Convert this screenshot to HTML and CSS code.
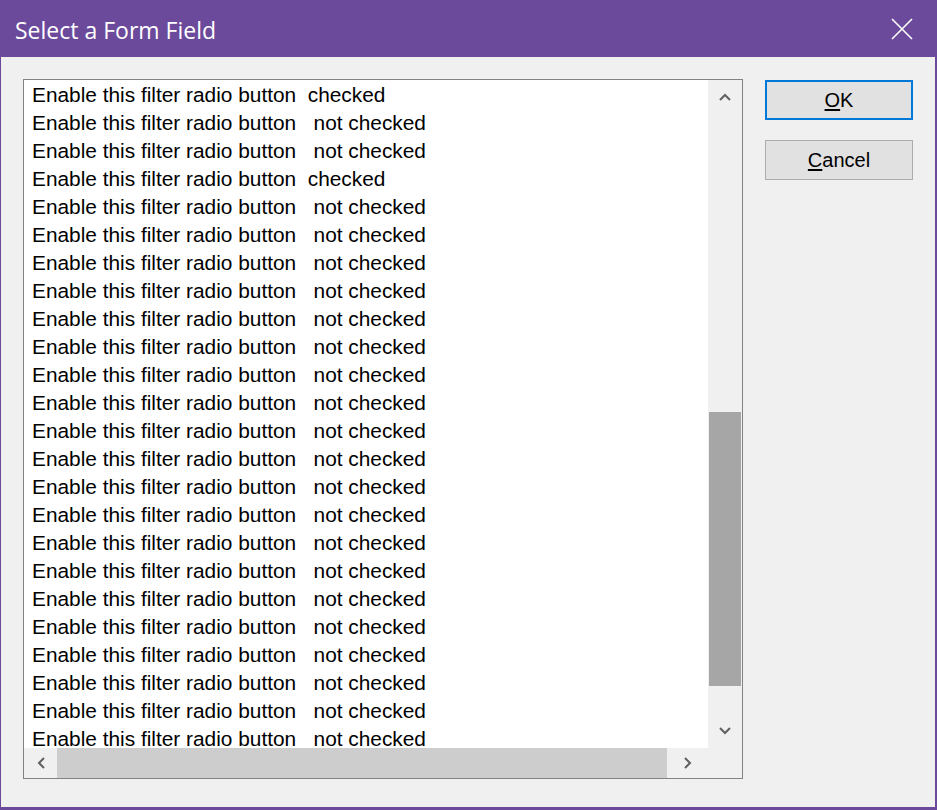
FILE: index.html
```html
<!DOCTYPE html>
<html>
<head>
<meta charset="utf-8">
<link rel="stylesheet" href="styles.css">
</head>
<body>
<div class="window">
  <div class="titlebar">
    <span class="title">Select a Form Field</span>
    <span class="close">
      <svg width="22" height="22" viewBox="0 0 22 22"><path d="M1 1 L21 21 M21 1 L1 21" stroke="#fff" stroke-width="1.6" fill="none"/></svg>
    </span>
  </div>
  <div class="content">
    <div class="listbox">
      <div class="rows">
        <div class="row">Enable this filter radio button  checked</div>
        <div class="row">Enable this filter radio button   not checked</div>
        <div class="row">Enable this filter radio button   not checked</div>
        <div class="row">Enable this filter radio button  checked</div>
        <div class="row">Enable this filter radio button   not checked</div>
        <div class="row">Enable this filter radio button   not checked</div>
        <div class="row">Enable this filter radio button   not checked</div>
        <div class="row">Enable this filter radio button   not checked</div>
        <div class="row">Enable this filter radio button   not checked</div>
        <div class="row">Enable this filter radio button   not checked</div>
        <div class="row">Enable this filter radio button   not checked</div>
        <div class="row">Enable this filter radio button   not checked</div>
        <div class="row">Enable this filter radio button   not checked</div>
        <div class="row">Enable this filter radio button   not checked</div>
        <div class="row">Enable this filter radio button   not checked</div>
        <div class="row">Enable this filter radio button   not checked</div>
        <div class="row">Enable this filter radio button   not checked</div>
        <div class="row">Enable this filter radio button   not checked</div>
        <div class="row">Enable this filter radio button   not checked</div>
        <div class="row">Enable this filter radio button   not checked</div>
        <div class="row">Enable this filter radio button   not checked</div>
        <div class="row">Enable this filter radio button   not checked</div>
        <div class="row">Enable this filter radio button   not checked</div>
        <div class="row">Enable this filter radio button   not checked</div>
        <div class="row">Enable this filter radio button   not checked</div>
      </div>
      <div class="vscroll">
        <div class="sbtn v">
          <svg width="12" height="8" viewBox="0 0 12 8"><polyline points="1,7 6,2 11,7" stroke="#606060" stroke-width="2" fill="none"/></svg>
        </div>
        <div class="vtrack">
          <div class="vthumb" style="margin-top:298px;height:274px"></div>
        </div>
        <div class="sbtn v">
          <svg width="12" height="8" viewBox="0 0 12 8"><polyline points="1,1 6,6 11,1" stroke="#606060" stroke-width="2" fill="none"/></svg>
        </div>
      </div>
      <div class="hscroll">
        <div class="sbtn hl">
          <svg width="8" height="12" viewBox="0 0 8 12"><polyline points="7,1 2,6 7,11" stroke="#606060" stroke-width="2" fill="none"/></svg>
        </div>
        <div class="hthumb" style="width:610px"></div>
        <div class="htrack"></div>
        <div class="sbtn hr">
          <svg width="8" height="12" viewBox="0 0 8 12"><polyline points="1,1 6,6 1,11" stroke="#606060" stroke-width="2" fill="none"/></svg>
        </div>
      </div>
      <div class="corner"></div>
    </div>
    <div class="buttons">
      <div class="btn default"><span class="ul">O</span>K</div>
      <div class="btn"><span class="ul">C</span>ancel</div>
    </div>
  </div>
</div>
</body>
</html>
```

FILE: styles.css
```css
html, body {
  margin: 0;
  padding: 0;
}
body {
  width: 937px;
  height: 810px;
  overflow: hidden;
  background: #f0f0f0;
}
.window {
  width: 937px;
  height: 810px;
  display: flex;
  flex-direction: column;
  background: #f0f0f0;
}
.titlebar {
  height: 57px;
  flex: none;
  background: #6b4a9c;
  display: flex;
  align-items: center;
  justify-content: space-between;
  padding: 0 24px 0 15px;
}
.title {
  font-family: "Open Sans", "Noto Sans", sans-serif;
  font-size: 23px;
  color: #ffffff;
  padding-top: 3px;
}
.close {
  display: flex;
  padding-top: 1px;
}
.content {
  flex: 1;
  display: flex;
  gap: 22px;
  padding: 22px 22px 28px 22px;
  border-left: 1px solid #6b4a9c;
  border-right: 2px solid #6b4a9c;
  border-bottom: 3px solid #6b4a9c;
}
.listbox {
  width: 720px;
  height: 700px;
  box-sizing: border-box;
  border: 1px solid #828282;
  background: #ffffff;
  display: grid;
  grid-template-columns: 684px 34px;
  grid-template-rows: 668px 30px;
}
.rows {
  overflow: hidden;
  padding: 1px 0 0 8px;
  font-family: "Liberation Sans", Arial, sans-serif;
  font-size: 20.85px;
  color: #000;
}
.row {
  height: 28px;
  line-height: 28px;
  white-space: pre;
}
.vscroll {
  background: #f0f0f0;
  display: flex;
  flex-direction: column;
}
.sbtn {
  display: flex;
  align-items: center;
  justify-content: center;
  flex: none;
}
.sbtn.v {
  height: 34px;
}
.vtrack {
  flex: 1;
  display: flex;
  flex-direction: column;
}
.vthumb {
  background: #a6a6a6;
  margin-left: 1px;
  margin-right: 1px;
}
.hscroll {
  background: #f0f0f0;
  display: flex;
}
.sbtn.hl {
  width: 33px;
}
.hthumb {
  background: #cdcdcd;
  flex: none;
}
.htrack {
  flex: 1;
}
.sbtn.hr {
  width: 40px;
}
.corner {
  background: #f0f0f0;
}
.buttons {
  display: flex;
  flex-direction: column;
  gap: 20px;
  padding-top: 1px;
}
.btn {
  width: 148px;
  height: 40px;
  box-sizing: border-box;
  border: 1px solid #adadad;
  background: #e1e1e1;
  display: flex;
  align-items: center;
  justify-content: center;
  font-family: "Liberation Sans", Arial, sans-serif;
  font-size: 20px;
  color: #000;
}
.btn.default {
  border: 2px solid #0078d7;
}
.ul {
  text-decoration: underline;
  text-underline-offset: 2px;
}
```
